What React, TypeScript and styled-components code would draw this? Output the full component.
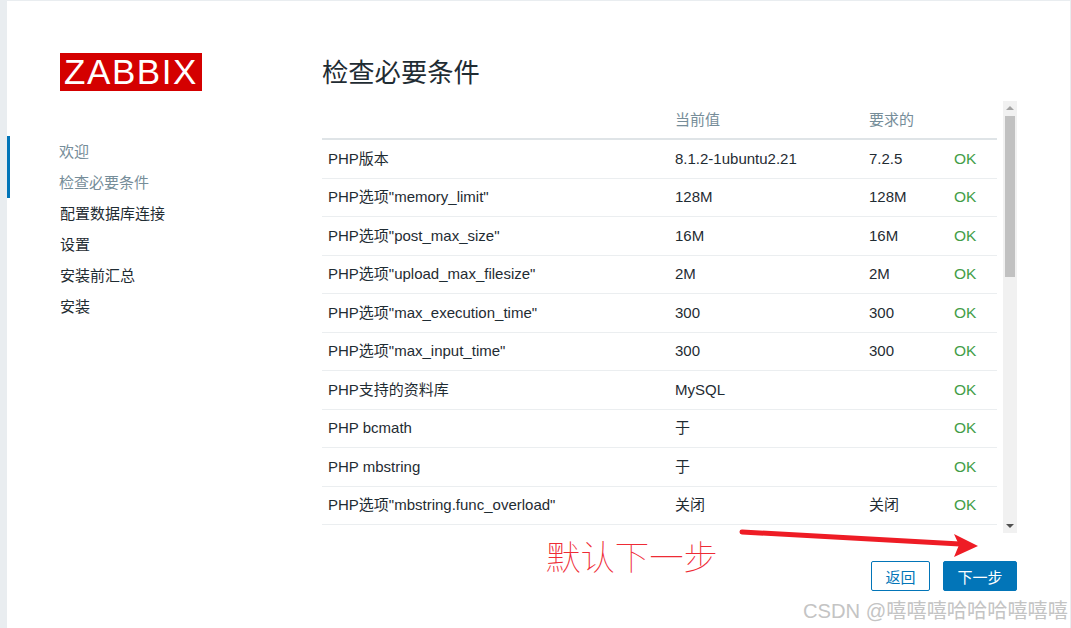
import React from "react";
import styled, { createGlobalStyle } from "styled-components";

const FONT = `"Liberation Sans", "Noto Sans CJK SC", Arial, sans-serif`;

const Global = createGlobalStyle`
  html, body { margin: 0; padding: 0; height: 100%; background: #e9edf0; overflow: hidden; }
  #root { height: 100%; }
  * { box-sizing: border-box; }
`;

const Screen = styled.div`
  position: relative;
  width: 1071px;
  height: 628px;
  padding: 1px 1px 0 7px;
  font-family: ${FONT};
  font-size: 15px;
  color: #1f2c33;
`;
const Card = styled.div`
  display: flex;
  height: 627px;
  background: #fff;
`;
const Sidebar = styled.aside`
  width: 315px;
  flex: none;
  padding-top: 52px;
`;
const Logo = styled.div`
  width: 142px;
  height: 38px;
  margin-left: 53px;
  background: #d40000;
  color: #fff;
  font-size: 35px;
  line-height: 38px;
  text-align: center;
  letter-spacing: 1.6px;
`;
const Nav = styled.ul`
  list-style: none;
  margin: 45px 0 0;
  padding: 0;
`;
const NavItem = styled.li<{ $done?: boolean }>`
  height: 31px;
  line-height: 32px;
  padding-left: ${p => (p.$done ? 49 : 53)}px;
  border-left: ${p => (p.$done ? "3px solid #0275b8" : "none")};
  color: ${p => (p.$done ? "#768d99" : "#1f2c33")};
  font-size: 15px;
`;
const Main = styled.main`
  width: 695px;
  flex: none;
  display: flex;
  flex-direction: column;
`;
const Title = styled.h1`
  margin: 52px 0 0;
  height: 48px;
  font-size: 26.3px;
  line-height: 40px;
  font-weight: 400;
  color: #1f2c33;
`;
const ScrollArea = styled.div`
  display: flex;
  height: 432px;
`;
const Table = styled.table`
  width: 675px;
  border-collapse: collapse;
  table-layout: fixed;
  flex: none;
  align-self: flex-start;
`;
const Th = styled.th<{ $w: number }>`
  width: ${p => p.$w}px;
  height: 38px;
  padding: 0 6px;
  text-align: left;
  font-weight: 400;
  font-size: 15px;
  line-height: 18px;
  color: #768d99;
  border-bottom: 2px solid #dfe4e7;
`;
const Tr = styled.tr`
  height: 38px;
  border-bottom: 1px solid #ebeef0;
  &:nth-child(odd) { height: 39px; }
`;
const Td = styled.td`
  padding: 0 6px;
  white-space: nowrap;
  font-size: 15px;
  line-height: 18px;
`;
const Cell = styled.span`
  display: block;
  height: 18px;
  line-height: 18px;
`;
const Ok = styled(Td)`
  color: #429e47;
  font-size: 15.5px;
`;
const Scrollbar = styled.div`
  position: relative;
  width: 14px;
  height: 100%;
  margin-left: 6px;
  background: #f1f1f1;
  flex: none;
`;
const Thumb = styled.div`
  position: absolute;
  left: 2px;
  top: 15px;
  width: 10px;
  height: 161px;
  background: #c1c1c1;
`;
const Arrow = styled.span<{ $down?: boolean }>`
  position: absolute;
  left: 3px;
  ${p => (p.$down ? "bottom: 5px;" : "top: 5px;")}
  width: 0;
  height: 0;
  border-left: 4px solid transparent;
  border-right: 4px solid transparent;
  ${p => (p.$down ? "border-top: 4px solid #505050;" : "border-bottom: 4px solid #a3a3a3;")}
`;
const Footer = styled.div`
  display: flex;
  justify-content: flex-end;
  gap: 13px;
  margin-top: 28px;
`;
const Button = styled.button<{ $primary?: boolean }>`
  height: 30px;
  width: ${p => (p.$primary ? 74 : 59)}px;
  padding: 0;
  border-radius: 2px;
  border: 1px solid #0275b8;
  background: ${p => (p.$primary ? "#0275b8" : "#fff")};
  color: ${p => (p.$primary ? "#fff" : "#0275b8")};
  font-family: ${FONT};
  font-size: 15px;
`;
const Note = styled.div`
  position: absolute;
  left: 546px;
  top: 532px;
  font-family: "Noto Sans CJK SC", sans-serif;
  font-weight: 100;
  font-size: 34.4px;
  line-height: 46px;
  color: #ee2b35;
  white-space: nowrap;
`;
const Pointer = styled.svg`
  position: absolute;
  left: 735px;
  top: 525px;
`;
const Watermark = styled.div`
  position: absolute;
  right: 3px;
  top: 598px;
  font-family: ${FONT};
  font-size: 20.2px;
  line-height: 26px;
  color: #c4c4c4;
  white-space: nowrap;
`;

const rows: [string, string, string][] = [
  ["PHP版本", "8.1.2-1ubuntu2.21", "7.2.5"],
  ['PHP选项"memory_limit"', "128M", "128M"],
  ['PHP选项"post_max_size"', "16M", "16M"],
  ['PHP选项"upload_max_filesize"', "2M", "2M"],
  ['PHP选项"max_execution_time"', "300", "300"],
  ['PHP选项"max_input_time"', "300", "300"],
  ["PHP支持的资料库", "MySQL", ""],
  ["PHP bcmath", "于", ""],
  ["PHP mbstring", "于", ""],
  ['PHP选项"mbstring.func_overload"', "关闭", "关闭"],
];

const steps = ["欢迎", "检查必要条件", "配置数据库连接", "设置", "安装前汇总", "安装"];

export default function App() {
  return (
    <Screen>
      <Global />
      <Card>
        <Sidebar>
          <Logo>ZABBIX</Logo>
          <Nav>
            {steps.map((s, i) => (
              <NavItem key={s} $done={i < 2}>{s}</NavItem>
            ))}
          </Nav>
        </Sidebar>
        <Main>
          <Title>检查必要条件</Title>
          <ScrollArea>
            <Table>
              <thead>
                <tr>
                  <Th $w={347} />
                  <Th $w={194}>当前值</Th>
                  <Th $w={85}>要求的</Th>
                  <Th $w={49} />
                </tr>
              </thead>
              <tbody>
                {rows.map(r => (
                  <Tr key={r[0]}>
                    <Td><Cell>{r[0]}</Cell></Td>
                    <Td><Cell>{r[1]}</Cell></Td>
                    <Td><Cell>{r[2]}</Cell></Td>
                    <Ok><Cell>OK</Cell></Ok>
                  </Tr>
                ))}
              </tbody>
            </Table>
            <Scrollbar>
              <Arrow />
              <Thumb />
              <Arrow $down />
            </Scrollbar>
          </ScrollArea>
          <Footer>
            <Button>返回</Button>
            <Button $primary>下一步</Button>
          </Footer>
        </Main>
      </Card>
      <Note>默认下一步</Note>
      <Pointer width="250" height="40" viewBox="0 0 250 40">
        <path d="M7 7 L225 19" stroke="#ee1c25" strokeWidth="5" strokeLinecap="round" fill="none" />
        <path d="M219 9 L243 21 L219 32 L224 20 Z" fill="#ee1c25" />
      </Pointer>
      <Watermark>CSDN @嘻嘻嘻哈哈哈嘻嘻嘻</Watermark>
    </Screen>
  );
}
